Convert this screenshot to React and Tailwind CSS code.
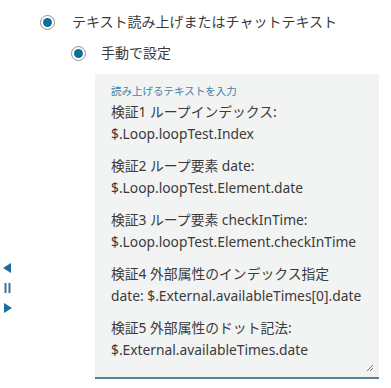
import React from "react";

const paragraphs = [
  ["検証1 ループインデックス:", "$.Loop.loopTest.Index"],
  ["検証2 ループ要素 date:", "$.Loop.loopTest.Element.date"],
  ["検証3 ループ要素 checkInTime:", "$.Loop.loopTest.Element.checkInTime"],
  ["検証4 外部属性のインデックス指定", "date: $.External.availableTimes[0].date"],
  ["検証5 外部属性のドット記法:", "$.External.availableTimes.date"],
];

function Radio() {
  return (
    <span className="flex h-[15px] w-[15px] shrink-0 items-center justify-center rounded-full border border-[#8d9096] bg-white">
      <span className="h-[9px] w-[9px] rounded-full bg-[#0f6f9c]" />
    </span>
  );
}

export default function App() {
  return (
    <div
      className="relative h-[388px] w-[391px] overflow-hidden bg-white text-[#3b3b3b]"
      style={{ fontFamily: '"Noto Sans", "Noto Sans CJK JP", sans-serif' }}
    >
      {/* 再生コントロール */}
      <div className="absolute left-[3px] top-[263px] flex flex-col items-center gap-[10px] text-[#1a6d9c]">
        <svg width="9" height="10" viewBox="0 0 9 10"><path d="M8 0 L0 5 L8 10 Z" fill="currentColor" /></svg>
        <svg width="9" height="10" viewBox="0 0 9 10"><rect x="1.5" y="0" width="2" height="10" fill="#3c6f96" /><rect x="5.5" y="0" width="2" height="10" fill="#3c6f96" /></svg>
        <svg width="9" height="10" viewBox="0 0 9 10"><path d="M1 0 L9 5 L1 10 Z" fill="currentColor" /></svg>
      </div>

      <div className="flex flex-col pt-[13px]">
        <label className="ml-[40px] flex items-center gap-[17px] text-[14px] leading-[18px]">
          <Radio />
          <span>テキスト読み上げまたはチャットテキスト</span>
        </label>

        <label className="ml-[71px] mt-[13px] flex items-center gap-[15px] text-[14px] leading-[18px]">
          <Radio />
          <span>手動で設定</span>
        </label>

        <div className="relative ml-[95px] mt-[12px] h-[305px] w-[284px] border-b-2 border-[#5b7d99] bg-[#f2f3f3] pl-[16px] pr-[6px] pt-[10px]">
          <div className="text-[10.5px] leading-[14px] text-[#3f82a8]">読み上げるテキストを入力</div>
          <div className="mt-[3px] flex flex-col gap-[10px] whitespace-nowrap text-[13.8px] leading-[22px] text-[#3a3a3a]">
            {paragraphs.map((p) => (
              <div key={p[0]}>
                <div>{p[0]}</div>
                <div>{p[1]}</div>
              </div>
            ))}
          </div>
          <svg className="absolute bottom-[5px] right-[5px]" width="8" height="8" viewBox="0 0 8 8">
            <path d="M7 1 L1 7 M7 4 L4 7" stroke="#777" strokeWidth="1" />
          </svg>
        </div>
      </div>
    </div>
  );
}
